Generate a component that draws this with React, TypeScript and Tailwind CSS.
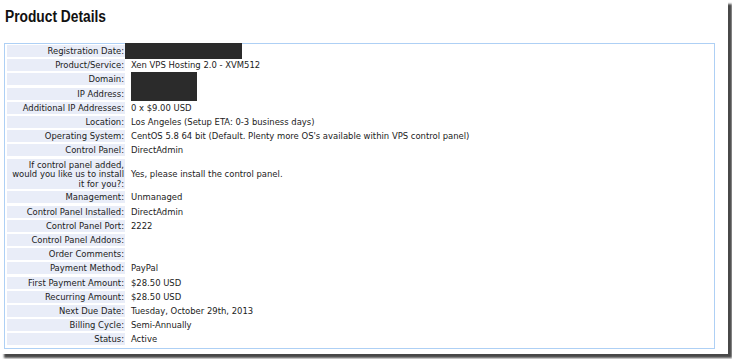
import React from "react";

type Row = { label: React.ReactNode; value?: React.ReactNode; tall?: boolean; redact?: "reg" | "dom" | "ip" };

const rows: Row[] = [
  { label: "Registration Date:", redact: "reg" },
  { label: "Product/Service:", value: "Xen VPS Hosting 2.0 - XVM512" },
  { label: "Domain:", redact: "dom" },
  { label: "IP Address:", redact: "ip" },
  { label: "Additional IP Addresses:", value: "0 x $9.00 USD" },
  { label: "Location:", value: "Los Angeles (Setup ETA: 0-3 business days)" },
  { label: "Operating System:", value: "CentOS 5.8 64 bit (Default. Plenty more OS's available within VPS control panel)" },
  { label: "Control Panel:", value: "DirectAdmin" },
  {
    label: (
      <>
        If control panel added,
        <br />
        would you like us to install
        <br />
        it for you?:
      </>
    ),
    value: "Yes, please install the control panel.",
    tall: true,
  },
  { label: "Management:", value: "Unmanaged" },
  { label: "Control Panel Installed:", value: "DirectAdmin" },
  { label: "Control Panel Port:", value: "2222" },
  { label: "Control Panel Addons:", value: "" },
  { label: "Order Comments:", value: "" },
  { label: "Payment Method:", value: "PayPal" },
  { label: "First Payment Amount:", value: "$28.50 USD" },
  { label: "Recurring Amount:", value: "$28.50 USD" },
  { label: "Next Due Date:", value: "Tuesday, October 29th, 2013" },
  { label: "Billing Cycle:", value: "Semi-Annually" },
  { label: "Status:", value: "Active" },
];

export default function App() {
  return (
    <div className="w-[732px] h-[359px] bg-white overflow-hidden">
      <div className="w-[728px] h-[354px] bg-white shadow-[4px_4px_2px_rgba(40,40,40,0.85)] pt-[7px]">
        <h1
          className="pl-[5px] text-[16px] leading-[20px] font-bold text-[#111]"
          style={{ fontFamily: '"Liberation Sans", Arial, sans-serif' }}
        >
          <span className="inline-block origin-left scale-x-[0.86]">Product Details</span>
        </h1>
        <div
          className="ml-[4px] mt-[16px] w-[711px] h-[306px] border border-[#aed0f5] pt-px pl-[2px] pr-[2px] text-[9.4px] leading-[12px] text-[#1b1b1b]"
          style={{ fontFamily: '"DejaVu Sans Condensed", "DejaVu Sans", sans-serif', fontStretch: "condensed" }}
        >
          <div className="grid grid-cols-[118px_1fr] gap-y-[2.2px] gap-x-[2px]">
            {rows.map((r, i) => (
              <React.Fragment key={i}>
                <div
                  className={
                    r.tall
                      ? "bg-[#e9edf8] text-right leading-[9.6px] py-px pr-px whitespace-nowrap"
                      : "bg-[#e9edf8] text-right leading-[12px] h-[12px] pr-px whitespace-nowrap"
                  }
                >
                  {r.label}
                </div>
                <div className="flex items-center pl-[4px] leading-[12px] whitespace-nowrap relative">
                  {r.value}
                  {r.redact === "reg" && (
                    <div className="absolute left-[-2px] top-[-2px] w-[117px] h-[16px] bg-[#2b2b2b]" />
                  )}
                  {r.redact === "dom" && (
                    <div className="absolute left-[4px] top-[-1px] w-[66px] h-[29px] bg-[#2b2b2b]" />
                  )}
                </div>
              </React.Fragment>
            ))}
          </div>
        </div>
      </div>
    </div>
  );
}
